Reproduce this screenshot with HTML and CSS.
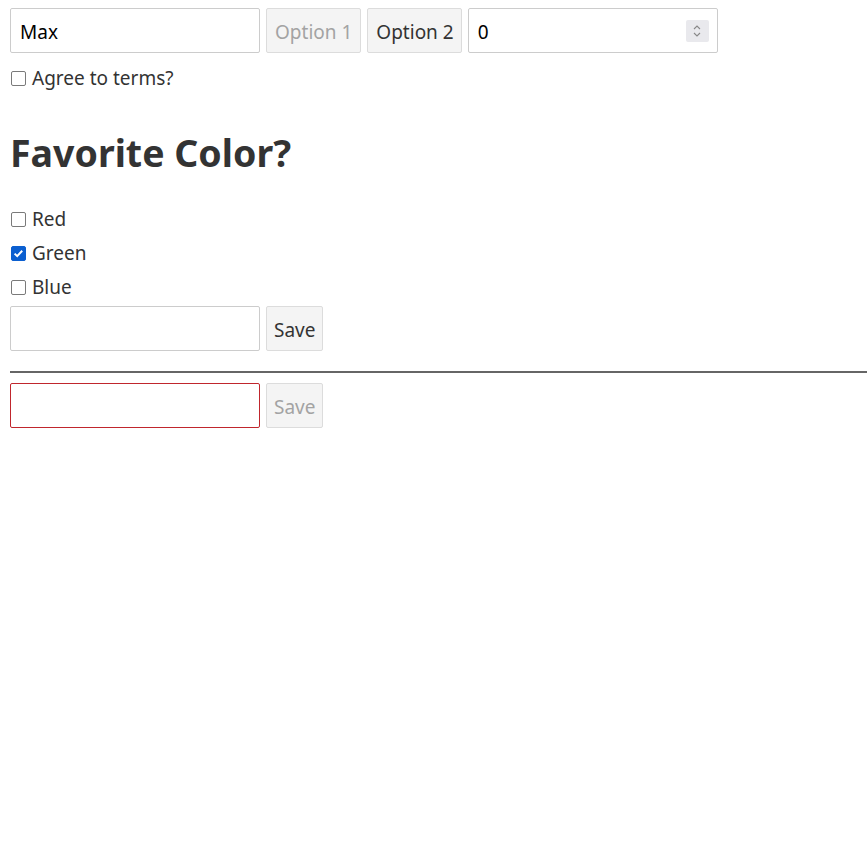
FILE: index.html
```html
<!DOCTYPE html>
<html>
<head>
<meta charset="utf-8">
<link rel="stylesheet" href="styles.css">
</head>
<body>
<div class="row">
  <input class="field" type="text" value="Max">
  <button class="btn" disabled>Option 1</button>
  <button class="btn btn-narrow">Option 2</button>
  <div class="field numfield">
    <input class="numinput" type="text" value="0">
    <span class="spin">
      <svg width="10" height="16" viewBox="0 0 10 16"><path d="M2 6 L5 3 L8 6" fill="none" stroke="#888" stroke-width="1.1"/><path d="M2 10 L5 13 L8 10" fill="none" stroke="#888" stroke-width="1.1"/></svg>
    </span>
  </div>
</div>
<label class="check agree"><input type="checkbox" class="cb"><span>Agree to terms?</span></label>

<h1 class="title">Favorite Color?</h1>

<div class="colors">
  <label class="check"><input type="checkbox" class="cb"><span>Red</span></label>
  <label class="check"><input type="checkbox" class="cb" checked><span>Green</span></label>
  <label class="check"><input type="checkbox" class="cb"><span>Blue</span></label>
</div>

<div class="row save-row">
  <input class="field" type="text" value="">
  <button class="btn btn-save">Save</button>
</div>
<hr class="divider">
<div class="row">
  <input class="field invalid" type="text" value="">
  <button class="btn btn-save" disabled>Save</button>
</div>
</body>
</html>
```
FILE: styles.css
```css
html, body {
  background: #fff;
}
body {
  margin: 8px 0 0 10px;
  font-family: "Noto Sans", "Open Sans", sans-serif;
  font-size: 19px;
  color: #333;
}
.row {
  display: flex;
  gap: 6px;
  height: 45px;
}
.field {
  box-sizing: border-box;
  width: 250px;
  height: 45px;
  border: 1px solid #cccccc;
  border-radius: 2px;
  padding: 2px 9px 0;
  font-family: inherit;
  font-size: 19px;
  color: #000;
  background: #fff;
  outline: none;
  margin: 0;
}
.field.invalid {
  border-color: #c0262d;
}
.numfield {
  display: flex;
  align-items: center;
  padding-top: 0;
}
.numinput {
  flex: 1;
  min-width: 0;
  border: none;
  outline: none;
  padding: 2px 0 0;
  margin: 0;
  font-family: inherit;
  font-size: 19px;
  color: #000;
  background: transparent;
}
.spin {
  display: flex;
  align-items: center;
  justify-content: center;
  width: 23px;
  height: 22px;
  background: #e9e9ed;
  border-radius: 2px;
  margin-right: -1px;
}
.btn {
  box-sizing: border-box;
  height: 45px;
  margin: 0;
  padding: 2px 8px 0;
  border: 1px solid #dcdcdc;
  border-radius: 2px;
  background: #f4f4f4;
  font-family: inherit;
  font-size: 19px;
  color: #333;
}
.btn-narrow {
  padding: 2px 7px 0 8px;
}
.btn-save {
  padding: 2px 7px 0;
}
.btn:disabled {
  color: #a3a3a3;
}
.check {
  display: flex;
  align-items: center;
  gap: 6px;
  height: 34px;
}
.agree {
  margin-top: 8px;
}
.cb {
  appearance: none;
  -webkit-appearance: none;
  box-sizing: border-box;
  width: 15px;
  height: 15px;
  margin: 0 0 0 1px;
  border: 1.5px solid #7a7a7a;
  border-radius: 2px;
  background: #fff;
  flex: none;
}
.cb:checked {
  border-color: #0b5fd0;
  background: #0b5fd0 url("data:image/svg+xml,%3Csvg xmlns='http://www.w3.org/2000/svg' width='15' height='15' viewBox='0 0 15 15'%3E%3Cpath d='M3.6 7.6 L6.2 10.1 L11.2 4.8' fill='none' stroke='white' stroke-width='2'/%3E%3C/svg%3E") center / 15px 15px no-repeat;
}
.title {
  margin: 35px 0 27px;
  font-size: 37.5px;
  line-height: 45px;
  font-weight: 700;
  color: #333;
}
.save-row {
  margin-top: 2px;
}
.divider {
  margin: 20px 0 10px;
  border: none;
  height: 2px;
  background: #666;
}
```
